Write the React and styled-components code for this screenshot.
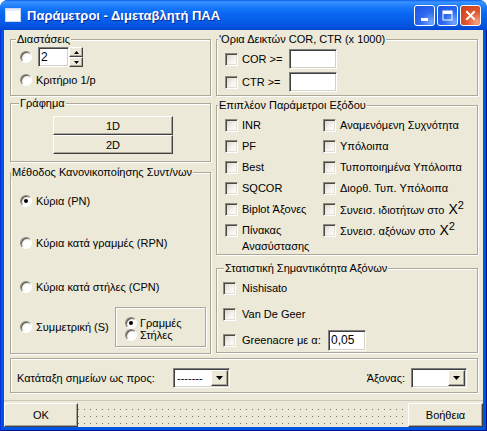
import React from "react";
import styled, { createGlobalStyle } from "styled-components";

const GlobalStyle = createGlobalStyle`
  html, body { margin: 0; padding: 0; background: #fff; }
  body {
    font-family: "Liberation Sans", Arial, sans-serif;
    font-size: 11px;
    color: #000;
  }
  * { box-sizing: border-box; }
`;

const Window = styled.div`
  width: 487px;
  height: 431px;
  display: flex;
  flex-direction: column;
  border-radius: 8px 8px 0 0;
  overflow: hidden;
  background: #0054e3;
`;

const TitleBar = styled.div`
  height: 30px;
  flex: none;
  display: flex;
  align-items: center;
  padding: 0 6px 0 5px;
  background: linear-gradient(
    to bottom,
    #0a5df0 0px,
    #3d95ff 2px,
    #2a88ff 4px,
    #1677fa 8px,
    #0b69f2 13px,
    #0760eb 19px,
    #0558e4 24px,
    #044fdb 28px,
    #0344cc 30px
  );
`;

const Title = styled.div`
  flex: 1;
  margin-left: 6px;
  color: #fff;
  font-size: 13px;
  font-weight: bold;
  text-shadow: 1px 1px 0 #0b2a9a;
  white-space: nowrap;
`;

const CapButtons = styled.div`
  display: flex;
  gap: 2px;
`;

const CapBtn = styled.div`
  width: 21px;
  height: 21px;
  border: 1px solid #fff;
  border-radius: 3px;
  display: flex;
  align-items: center;
  justify-content: center;
  background: ${({ $close }) =>
    $close
      ? "radial-gradient(circle at 85% 85%, #f6a384 0%, #e2552f 45%, #c83c19 100%)"
      : "radial-gradient(circle at 85% 85%, #72a8ff 0%, #2d6af2 45%, #1b52de 100%)"};
`;

const Frame = styled.div`
  flex: 1;
  display: flex;
  padding: 0 4px 4px;
  background: #0054e3;
  box-shadow: inset 1px 0 0 #0831d9, inset -1px 0 0 #00138c, inset 0 -1px 0 #00138c;
`;

const Client = styled.div`
  flex: 1;
  display: flex;
  flex-direction: column;
  background: #ece9d8;
`;

const Content = styled.div`
  padding: 3px 5px 0 6px;
`;

const Main = styled.div`
  display: grid;
  grid-template-columns: 201px 262px;
  column-gap: 5px;
  align-items: start;
  height: 321px;
`;

const Column = styled.div`
  display: flex;
  flex-direction: column;
`;

const Group = styled.fieldset`
  margin: ${({ $mt }) => $mt || 0}px 0 0;
  padding: 0;
  min-width: 0;
  height: ${({ $h }) => $h}px;
  border: 1px solid #aca899;
  box-shadow: inset 1px 1px 0 #fff, 1px 1px 0 #fff;
`;

const Legend = styled.legend`
  margin-left: ${({ $indent }) => $indent}px;
  padding: 0 1px;
  line-height: 13px;
  font-size: 11px;
  white-space: nowrap;
  background: #ece9d8;
`;

const Body = styled.div`
  display: flex;
  flex-direction: column;
  gap: ${({ $gap }) => $gap || 0}px;
  padding: ${({ $pad }) => $pad};
`;

const Row = styled.div`
  display: flex;
  align-items: center;
  height: ${({ $h }) => $h || 20}px;
  margin-top: ${({ $mt }) => $mt || 0}px;
  gap: ${({ $gap }) => ($gap === undefined ? 4 : $gap)}px;
`;

const Text = styled.span`
  line-height: 13px;
  white-space: nowrap;
  width: ${({ $w }) => ($w ? `${$w}px` : "auto")};
  flex: none;
`;

const Radio = styled.span`
  position: relative;
  flex: none;
  width: 12px;
  height: 12px;
  border-radius: 50%;
  border: 1px solid;
  border-color: #8d8a7e #fff #fff #8d8a7e;
  box-shadow: inset 1px 1px 0 #5a5850;
  background: radial-gradient(circle at 65% 65%, #fff 35%, #dedbd0 95%);

  &::after {
    content: "";
    display: ${({ $on }) => ($on ? "block" : "none")};
    position: absolute;
    left: 3px;
    top: 3px;
    width: 4px;
    height: 4px;
    border-radius: 50%;
    background: #000;
  }
`;

const Check = styled.span`
  flex: none;
  width: 13px;
  height: 13px;
  margin-top: ${({ $mt }) => $mt || 0}px;
  border: 1px solid;
  border-color: #8d8a7e #fff #fff #8d8a7e;
  box-shadow: inset 1px 1px 0 #4a4943, inset -1px -1px 0 #e2dfd4;
  background: linear-gradient(135deg, #d3d1c7 0%, #f3f2ee 55%, #fff 100%);
`;

const Edit = styled.div`
  flex: none;
  width: ${({ $w }) => $w}px;
  height: ${({ $h }) => $h || 20}px;
  padding: 0 2px;
  background: #fff;
  border: 1px solid;
  border-color: #808080 #fff #fff #808080;
  box-shadow: inset 1px 1px 0 #404040, inset -1px -1px 0 #d4d0c8;
  font-size: 12px;
  line-height: ${({ $h }) => ($h || 20) - 2}px;
  white-space: nowrap;
`;

const SpinEdit = styled.div`
  display: flex;
`;

const Spin = styled.div`
  display: flex;
  flex-direction: column;
  width: 14px;
  height: 20px;
`;

const Raised = styled.div`
  display: flex;
  align-items: center;
  justify-content: center;
  background: #ece9d8;
  border: 1px solid;
  border-color: #fff #404040 #404040 #fff;
  box-shadow: inset -1px -1px 0 #aca899;
`;

const SpinBtn = styled(Raised)`
  height: 10px;
`;

const Button = styled(Raised)`
  flex: none;
  width: ${({ $w }) => $w}px;
  height: ${({ $h }) => $h}px;
  font-size: 11px;
`;

const GraphBody = styled.div`
  display: flex;
  flex-direction: column;
  padding: 6px 0 0 42px;
`;

const SubBox = styled.div`
  margin-left: auto;
  width: 91px;
  height: 40px;
  padding: 9px 0 0 9px;
  border: 1px solid #aca899;
  box-shadow: inset 1px 1px 0 #fff, 1px 1px 0 #fff;
`;

const SubRow = styled.div`
  display: flex;
  align-items: center;
  gap: 3px;
  height: 12px;
  line-height: 12px;
`;

const CheckGrid = styled.div`
  display: grid;
  grid-template-columns: 98px 1fr;
  grid-auto-rows: 21px;
  padding: 3px 0 0 8px;
`;

const CheckItem = styled.div`
  display: flex;
  align-items: ${({ $top }) => ($top ? "flex-start" : "center")};
  gap: 4px;
  white-space: nowrap;
`;

const Multi = styled.span`
  padding-top: 2px;
  line-height: 16px;
`;

const BigX = styled.span`
  font-size: 14px;
  line-height: 13px;
  margin-left: 1px;
`;

const Sup = styled.sup`
  font-size: 11px;
  line-height: 0;
  vertical-align: 5px;
`;

const Strip = styled.div`
  margin-top: 4px;
  height: 35px;
  display: flex;
  align-items: center;
  padding: 5px 10px 0 6px;
  border: 1px solid #aca899;
  box-shadow: inset 1px 1px 0 #fff, 1px 1px 0 #fff;
`;

const Combo = styled.div`
  flex: none;
  width: ${({ $w }) => $w}px;
  height: 20px;
  display: flex;
  align-items: center;
  justify-content: space-between;
  padding: 1px 1px 1px 3px;
  background: #fff;
  border: 1px solid;
  border-color: #808080 #fff #fff #808080;
  box-shadow: inset 1px 1px 0 #404040, inset -1px -1px 0 #d4d0c8;
  line-height: 13px;
`;

const DropBtn = styled(Raised)`
  width: 17px;
  height: 16px;
`;

const Spacer = styled.div`
  flex: 1;
`;

const Footer = styled.div`
  margin-top: 7px;
  border-top: 1px solid #cbc8b9;
  padding-top: 2px;
  display: flex;
  height: 27px;
`;

const Dotted = styled.div`
  flex: 1;
  height: 24px;
  background-color: #ece9d8;
  background-image: linear-gradient(to right, #ece9d8 5px, transparent 5px),
    linear-gradient(to bottom, #ece9d8 6px, #76746c 6px);
  background-size: 6px 7px;
  background-position: 1px 0;
`;

const Arrow = ({ up, w = 5, h = 3 }) => (
  <svg width={w} height={h} viewBox={`0 0 ${w} ${h}`}>
    <polygon
      points={up ? `0,${h} ${w / 2},0 ${w},${h}` : `0,0 ${w},0 ${w / 2},${h}`}
      fill="#000"
    />
  </svg>
);

const AppIcon = () => (
  <svg width="16" height="14" viewBox="0 0 16 14">
    <rect x="0.5" y="0.5" width="15" height="13" fill="#fff" stroke="#c9d6ef" />
    <rect x="1" y="1" width="14" height="2" fill="#e6ecf8" />
  </svg>
);

const DropCombo = ({ w, value }) => (
  <Combo $w={w}>
    <span>{value}</span>
    <DropBtn>
      <Arrow w={7} h={4} />
    </DropBtn>
  </Combo>
);

const CheckLabel = ({ children }) => (
  <CheckItem>
    <Check />
    <Text>{children}</Text>
  </CheckItem>
);

const App = () => (
  <>
    <GlobalStyle />
    <Window>
      <TitleBar>
        <AppIcon />
        <Title>Παράμετροι - Διμεταβλητή ΠΑΑ</Title>
        <CapButtons>
          <CapBtn>
            <svg width="13" height="13" viewBox="0 0 13 13">
              <rect x="3" y="9" width="7" height="3" fill="#fff" />
            </svg>
          </CapBtn>
          <CapBtn>
            <svg width="13" height="13" viewBox="0 0 13 13">
              <rect x="2" y="2" width="9" height="9" fill="none" stroke="#fff" strokeWidth="1" />
              <rect x="2" y="2" width="9" height="3" fill="#fff" />
            </svg>
          </CapBtn>
          <CapBtn $close>
            <svg width="13" height="13" viewBox="0 0 13 13">
              <path d="M3 3 L10 10 M10 3 L3 10" stroke="#fff" strokeWidth="2" strokeLinecap="square" />
            </svg>
          </CapBtn>
        </CapButtons>
      </TitleBar>
      <Frame>
        <Client>
          <Content>
            <Main>
              <Column>
                <Group $h={63}>
                  <Legend $indent={5}>Διαστάσεις</Legend>
                  <Body $pad="1px 0 0 9px" $gap={4}>
                    <Row $h={20} $gap={6}>
                      <Radio />
                      <SpinEdit>
                        <Edit $w={31}>2</Edit>
                        <Spin>
                          <SpinBtn>
                            <Arrow up />
                          </SpinBtn>
                          <SpinBtn>
                            <Arrow />
                          </SpinBtn>
                        </Spin>
                      </SpinEdit>
                    </Row>
                    <Row $h={18}>
                      <Radio />
                      <Text>Κριτήριο 1/p</Text>
                    </Row>
                  </Body>
                </Group>

                <Group $h={65} $mt={1}>
                  <Legend $indent={8}>Γράφημα</Legend>
                  <GraphBody>
                    <Button $w={120} $h={19}>1D</Button>
                    <Button $w={120} $h={19}>2D</Button>
                  </GraphBody>
                </Group>

                <Group $h={188} $mt={4}>
                  <Legend $indent={0}>Μέθοδος Κανονικοποίησης Συντ/νων</Legend>
                  <Body $pad="12px 4px 0 9px">
                    <Row>
                      <Radio $on />
                      <Text>Κύρια (PN)</Text>
                    </Row>
                    <Row $mt={22}>
                      <Radio />
                      <Text>Κύρια κατά γραμμές (RPN)</Text>
                    </Row>
                    <Row $mt={24}>
                      <Radio />
                      <Text>Κύρια κατά στήλες (CPN)</Text>
                    </Row>
                    <Row $mt={10} $h={40}>
                      <Radio />
                      <Text>Συμμετρική (S)</Text>
                      <SubBox>
                        <SubRow>
                          <Radio $on />
                          <span>Γραμμές</span>
                        </SubRow>
                        <SubRow>
                          <Radio />
                          <span>Στήλες</span>
                        </SubRow>
                      </SubBox>
                    </Row>
                  </Body>
                </Group>
              </Column>

              <Column>
                <Group $h={63}>
                  <Legend $indent={1}>'Ορια Δεικτών COR, CTR (x 1000)</Legend>
                  <Body $pad="3px 0 0 8px" $gap={3}>
                    <Row>
                      <Check />
                      <Text $w={43}>COR &gt;=</Text>
                      <Edit $w={48} />
                    </Row>
                    <Row>
                      <Check />
                      <Text $w={43}>CTR &gt;=</Text>
                      <Edit $w={48} />
                    </Row>
                  </Body>
                </Group>

                <Group $h={156} $mt={3}>
                  <Legend $indent={1}>Επιπλέον Παράμετροι Εξόδου</Legend>
                  <CheckGrid>
                    <CheckLabel>INR</CheckLabel>
                    <CheckLabel>Αναμενόμενη Συχνότητα</CheckLabel>
                    <CheckLabel>PF</CheckLabel>
                    <CheckLabel>Υπόλοιπα</CheckLabel>
                    <CheckLabel>Best</CheckLabel>
                    <CheckLabel>Τυποποιημένα Υπόλοιπα</CheckLabel>
                    <CheckLabel>SQCOR</CheckLabel>
                    <CheckLabel>Διορθ. Τυπ. Υπόλοιπα</CheckLabel>
                    <CheckLabel>Biplot Άξονες</CheckLabel>
                    <CheckLabel>
                      Συνεισ. ιδιοτήτων στο <BigX>X</BigX>
                      <Sup>2</Sup>
                    </CheckLabel>
                    <CheckItem $top>
                      <Check $mt={4} />
                      <Multi>
                        Πίνακας
                        <br />
                        Ανασύστασης
                      </Multi>
                    </CheckItem>
                    <CheckLabel>
                      Συνεισ. αξόνων στο <BigX>X</BigX>
                      <Sup>2</Sup>
                    </CheckLabel>
                  </CheckGrid>
                </Group>

                <Group $h={91} $mt={7}>
                  <Legend $indent={7}>Στατιστική Σημαντικότητα Αξόνων</Legend>
                  <Body $pad="3px 0 0 6px" $gap={5}>
                    <Row $h={21} $gap={6}>
                      <Check />
                      <Text>Nishisato</Text>
                    </Row>
                    <Row $h={21} $gap={6}>
                      <Check />
                      <Text>Van De Geer</Text>
                    </Row>
                    <Row $h={21} $gap={6}>
                      <Check />
                      <Text $w={80}>Greenacre με α:</Text>
                      <Edit $w={38} $h={21}>0,05</Edit>
                    </Row>
                  </Body>
                </Group>
              </Column>
            </Main>

            <Strip>
              <Text $w={156}>Κατάταξη σημείων ως προς:</Text>
              <DropCombo w={57} value="-------" />
              <Spacer />
              <Text>Άξονας:</Text>
              <Spacer style={{ flex: "none", width: 6 }} />
              <DropCombo w={56} value="" />
            </Strip>
          </Content>

          <Footer>
            <Button $w={74} $h={24}>OK</Button>
            <Dotted />
            <Button $w={75} $h={24}>Βοήθεια</Button>
          </Footer>
        </Client>
      </Frame>
    </Window>
  </>
);

export default App;
